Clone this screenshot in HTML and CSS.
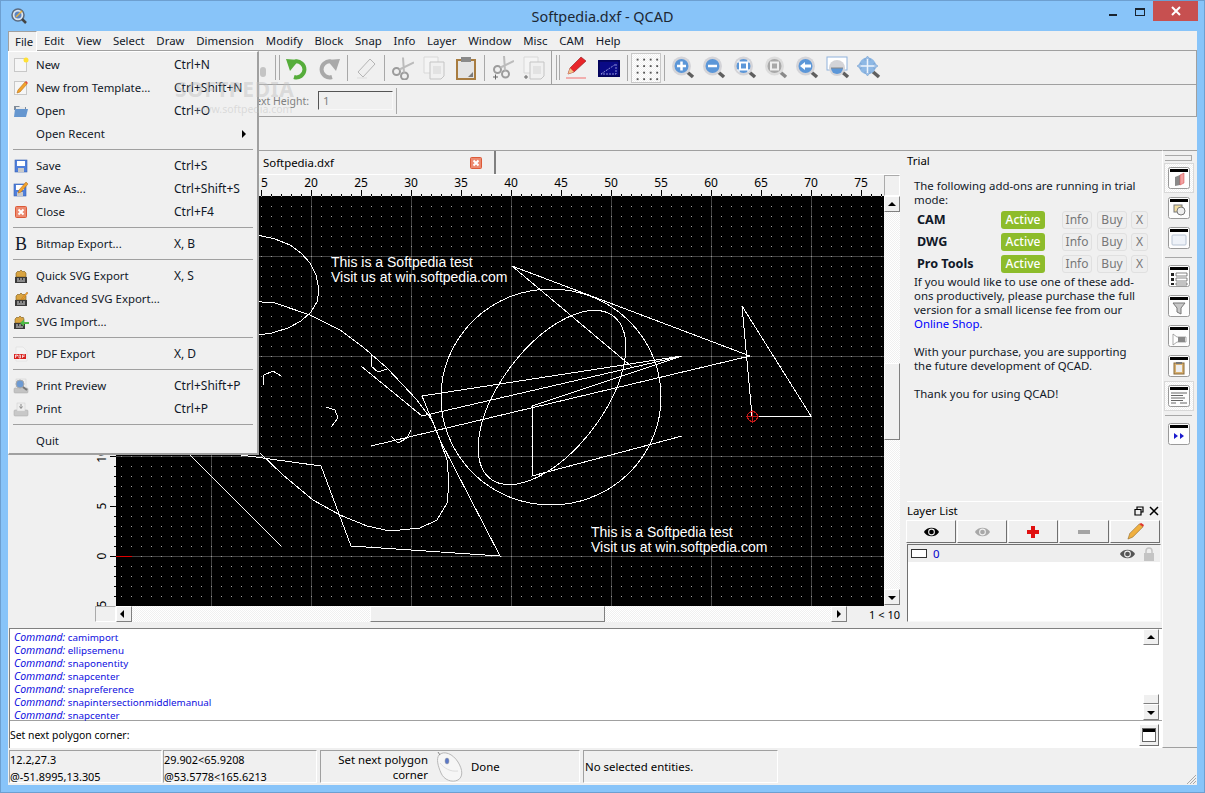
FILE: index.html
```html
<!DOCTYPE html>
<html lang="en">
<head>
    <meta charset="UTF-8">
    <title>Softpedia.dxf - QCAD</title>
    <link rel="stylesheet" href="styles.css">
</head>
<body>

<!--icon sprites-->
<svg class="sprites" xmlns="http://www.w3.org/2000/svg">
    <symbol id="i-new" viewBox="0 0 16 16"><rect x="1.5" y="1.5" width="12" height="13" fill="#f6f6f6" stroke="#c8c8c8"/><circle cx="13" cy="3" r="2.5" fill="#ffe135"/></symbol>
    <symbol id="i-template" viewBox="0 0 16 16"><rect x="1.5" y="1.5" width="12" height="13" fill="#f6f6f6" stroke="#c8c8c8"/><path d="M4 13l1-3 7-8 2 2-7 8z" fill="#f2a32c" stroke="#b8701a" stroke-width=".6"/><path d="M12 2l2 2 1-1-2-2z" fill="#e8483a"/></symbol>
    <symbol id="i-open" viewBox="0 0 16 16"><path d="M1 3h5l1 1h6v3H1z" fill="#7e8a98"/><path d="M2 6h13l-2 8H1z" fill="#6596cf"/><path d="M3 4h9v2H3z" fill="#e8e8e8"/></symbol>
    <symbol id="i-save" viewBox="0 0 16 16"><rect x="2" y="2" width="12" height="12" fill="#4f7fdc" stroke="#3b62b0" stroke-width=".6"/><rect x="4" y="3" width="8" height="5" fill="#fff"/><rect x="5" y="10" width="6" height="4" fill="#c9c9c9"/></symbol>
    <symbol id="i-saveas" viewBox="0 0 16 16"><rect x="1" y="3" width="12" height="12" fill="#4f7fdc" stroke="#3b62b0" stroke-width=".6"/><rect x="3" y="4" width="8" height="5" fill="#fff"/><rect x="4" y="11" width="6" height="4" fill="#c9c9c9"/><path d="M5 12l1-3 7-8 2 2-7 8z" fill="#f2a32c" stroke="#a8651a" stroke-width=".5"/></symbol>
    <symbol id="i-close" viewBox="0 0 16 16"><rect x="2.500" y="2.500" width="11" height="11" rx="1" fill="#ec8a70" stroke="#dc5a38"/><path d="M5.500 5.500l5 5M10.500 5.500l-5 5" stroke="#fff" stroke-width="2"/></symbol>
    <symbol id="i-svg" viewBox="0 0 16 16"><path d="M3 5l2-2 1 1 2-2 2 2 1-1 2 2v4H3z" fill="#d9a441" stroke="#7a5a1c" stroke-width=".6"/><rect x="2" y="9" width="12" height="6" fill="#3a3a3a"/><path d="M4 11h2M7 11h2M10 11h2M4 13h8" stroke="#ddd"/></symbol>
    <symbol id="i-svgedit" viewBox="0 0 16 16"><path d="M3 5l2-2 1 1 2-2 2 2 1-1 2 2v4H3z" fill="#d9a441" stroke="#7a5a1c" stroke-width=".6"/><rect x="2" y="9" width="12" height="6" fill="#3a3a3a"/><path d="M4 11h2M7 11h2M10 11h2M4 13h8" stroke="#ddd"/><path d="M8 9l1-2 5-6 1 1-5 6z" fill="#f2a32c" stroke="#a8651a" stroke-width=".4"/></symbol>
    <symbol id="i-svgin" viewBox="0 0 16 16"><path d="M2 5l2-2 1 1 2-2 2 2 1-1 1 2v4H2z" fill="#d9a441" stroke="#7a5a1c" stroke-width=".6"/><rect x="1" y="9" width="11" height="6" fill="#3a3a3a"/><path d="M3 11h2M6 11h2M3 13h7" stroke="#ddd"/><path d="M16 8h-5V5.500L7 9l4 3.500V10h5z" fill="#4fb848"/></symbol>
    <symbol id="i-pdf" viewBox="0 0 16 16"><path d="M3 1h7l4 4v10H3z" fill="#f4f4f4" stroke="#ddd" stroke-width=".6"/><rect x="1" y="8" width="12" height="5" fill="#d8231f"/><path d="M2.500 9v3M2.500 9h2v1h-2M6 9v3h1.500V9zM9.500 9v3M9.500 9H12M9.500 10.500h2" stroke="#fff" stroke-width=".7" fill="none"/></symbol>
    <symbol id="i-preview" viewBox="0 0 16 16"><rect x="1" y="10" width="14" height="5" rx="1" fill="#c4c4c4" stroke="#a8a8a8" stroke-width=".5"/><rect x="3" y="1" width="10" height="9" fill="#eee" stroke="#ccc" stroke-width=".5"/><circle cx="7" cy="6" r="4" fill="#6d9ad2" stroke="#a8a8a8"/><path d="M10 9l4 3" stroke="#777" stroke-width="2"/></symbol>
    <symbol id="i-print" viewBox="0 0 16 16"><rect x="1" y="9" width="14" height="6" rx="1" fill="#c8c8c8" stroke="#aaa" stroke-width=".5"/><rect x="4" y="2" width="8" height="8" fill="#eee" stroke="#ccc" stroke-width=".5"/><path d="M8 3v4M6.500 5.500L8 7.500l1.500-2" stroke="#888" fill="none"/></symbol>

    <symbol id="t-undo" viewBox="0 0 24 24"><path d="M10 5.500a8 8 0 1 1-1 15.500" fill="none" stroke="#56ad3b" stroke-width="4"/><path d="M1 3l13 1-9 11z" fill="#56ad3b"/></symbol>
    <symbol id="t-redo" viewBox="0 0 24 24"><path d="M14 5.500a8 8 0 1 0 1 15.500" fill="none" stroke="#a9a9a9" stroke-width="4"/><path d="M23 3l-13 1 9 11z" fill="#a9a9a9"/></symbol>
    <symbol id="t-eraser" viewBox="0 0 24 24"><path d="M4 16L16 3l5 5-12 13z" fill="#efefef" stroke="#b4b4b4"/><path d="M4 16l5 5" stroke="#b4b4b4"/><path d="M3 22h10" stroke="#ddd"/></symbol>
    <symbol id="t-scissors" viewBox="0 0 24 24"><circle cx="6.500" cy="15.500" r="3.500" fill="none" stroke="#9c9c9c" stroke-width="2"/><circle cx="14.500" cy="20" r="3.500" fill="none" stroke="#9c9c9c" stroke-width="2"/><path d="M9.500 13.500L24 6.500M14 16.500L13 1.500" stroke="#bcbcbc" stroke-width="2"/></symbol>
    <symbol id="t-copy" viewBox="0 0 24 24"><path d="M2 1h14v16H2z" fill="#f4f4f4" stroke="#d8d8d8"/><path d="M8 6h14v14l-3 3H8z" fill="#f0f0f0" stroke="#c4c4c4"/><rect x="11" y="10" width="8" height="8" fill="#e2e2e2"/></symbol>
    <symbol id="t-paste" viewBox="0 0 24 24"><rect x="3" y="4" width="18" height="19" fill="#e4e4e4" stroke="#a87c40" stroke-width="2"/><rect x="7" y="1" width="10" height="5" fill="#8a8a8a"/><path d="M14 21l5-5v5z" fill="#7a7a7a"/></symbol>
    <symbol id="t-scissors2" viewBox="0 0 24 24"><circle cx="7.500" cy="13.500" r="3.500" fill="none" stroke="#9c9c9c" stroke-width="2"/><circle cx="15.500" cy="18" r="3.500" fill="none" stroke="#9c9c9c" stroke-width="2"/><path d="M10.500 11.500L24 5M15 14.500L14 0" stroke="#bcbcbc" stroke-width="2"/><path d="M3 21h5M5.500 18.500v5" stroke="#666"/></symbol>
    <symbol id="t-copy2" viewBox="0 0 24 24"><path d="M2 1h14v16H2z" fill="#f4f4f4" stroke="#d8d8d8"/><path d="M8 6h14v14l-3 3H8z" fill="#f0f0f0" stroke="#c4c4c4"/><rect x="11" y="10" width="8" height="8" fill="#e2e2e2"/><path d="M2 21h4M4 19v4" stroke="#666"/></symbol>
    <symbol id="t-pencil" viewBox="0 0 24 24"><path d="M3 18l2-6L16 1l5 4L9 16z" fill="#e8262a" stroke="#8e1a1c" stroke-width=".6"/><path d="M3 18l2-6 4 4z" fill="#f1c48a"/><path d="M1 22h20" stroke="#f29a9a" stroke-width="1.500"/></symbol>
    <symbol id="t-screen" viewBox="0 0 22 17"><rect width="22" height="17" fill="#05057a"/><rect x="1" y="1" width="20" height="15" fill="#0a0a86" stroke="#000" stroke-width=".5"/><path d="M3 14L18 4v10z" fill="none" stroke="#aeb4e8" stroke-width=".8" stroke-dasharray="2 1"/></symbol>
    <symbol id="t-zoombase" viewBox="0 0 24 24"><path d="M15 15l7 6" stroke="#5f5f5f" stroke-width="3.500"/><circle cx="10.500" cy="10" r="9.500" fill="#d4d4d8"/><circle cx="10.500" cy="10" r="7" fill="#5c97d8"/></symbol>
    <symbol id="t-zoomin" viewBox="0 0 24 24"><use href="#t-zoombase"/><path d="M10.500 5.500v9M6 10h9" stroke="#fff" stroke-width="2.500"/></symbol>
    <symbol id="t-zoomout" viewBox="0 0 24 24"><use href="#t-zoombase"/><path d="M6 10h9" stroke="#fff" stroke-width="2.500"/></symbol>
    <symbol id="t-zoomauto" viewBox="0 0 24 24"><use href="#t-zoombase"/><rect x="7" y="6.500" width="7" height="7" fill="none" stroke="#fff" stroke-width="2"/><path d="M5 7V5h2M14 5h2v2M16 13v2h-2M7 15H5v-2" stroke="#fff" fill="none"/></symbol>
    <symbol id="t-zoomsel" viewBox="0 0 24 24"><path d="M15 15l7 6" stroke="#8a8a8a" stroke-width="3.500"/><circle cx="10.500" cy="10" r="9.500" fill="#dcdcdc"/><circle cx="10.500" cy="10" r="7" fill="#a8a8a8"/><rect x="7" y="6.500" width="7" height="7" fill="none" stroke="#eee" stroke-width="2"/></symbol>
    <symbol id="t-zoomback" viewBox="0 0 24 24"><use href="#t-zoombase"/><path d="M5 10l5-4v2.500h6v3h-6V14z" fill="#fff"/></symbol>
    <symbol id="t-zoomwin" viewBox="0 0 24 24"><rect x="1" y="1" width="20" height="13" fill="#fff" stroke="#8fb2dc"/><path d="M15 15l7 6" stroke="#5f5f5f" stroke-width="3.500"/><circle cx="11" cy="12" r="8" fill="#d4d4d8"/><path d="M5 12a6 6 0 0 0 12 0z" fill="#5c97d8"/><path d="M5 12h12" stroke="#888"/></symbol>
    <symbol id="t-zoompan" viewBox="0 0 24 24"><path d="M15 15l7 6" stroke="#5f5f5f" stroke-width="3.500"/><circle cx="10.500" cy="10" r="8.500" fill="#8eb8e4"/><path d="M10.500 0l3 4h-6zM10.500 20l3-4h-6zM0 10l4-3v6zM21 10l-4-3v6z" fill="#9cc0e8" stroke="#6f98c8" stroke-width=".5"/><path d="M10.500 3v14M3.500 10h14" stroke="#eef4fb" stroke-width="1.500"/></symbol>

    <symbol id="i-eye" viewBox="0 0 18 12"><path d="M1 6c3-6 13-6 16 0-3 6-13 6-16 0z" fill="currentColor"/><circle cx="9" cy="6" r="3.600" fill="#f0f0f0"/><circle cx="9" cy="6" r="2.500" fill="currentColor"/></symbol>
    <symbol id="i-lock" viewBox="0 0 12 14"><rect x="1" y="6" width="10" height="8" fill="#c4c4c4"/><path d="M3 6V4a3 3 0 0 1 6 0v2" fill="none" stroke="#c4c4c4" stroke-width="1.500"/></symbol>
    <symbol id="i-lpencil" viewBox="0 0 18 18"><path d="M1 17l2-6L13 1l4 3L6 15z" fill="#f0b040" stroke="#8a6420" stroke-width=".6"/><path d="M13 1l4 3 1-2-3-2z" fill="#e0342a"/></symbol>

    <symbol id="w-frame" viewBox="0 0 22 22"><rect x=".5" y=".5" width="21" height="21" rx="2" fill="#fdfdfd" stroke="#9a9a9a"/><rect x="2" y="2" width="18" height="3" fill="#000"/></symbol>
    <symbol id="w-a" viewBox="0 0 22 22"><use href="#w-frame"/><path d="M7 10l5-2v10l-5 1z" fill="#888"/><path d="M12 8l4-2v10l-4 2z" fill="#f2a0a0" stroke="#c44" stroke-width=".5"/></symbol>
    <symbol id="w-b" viewBox="0 0 22 22"><use href="#w-frame"/><rect x="6" y="8" width="8" height="7" fill="#f0dca0" stroke="#777"/><circle cx="13" cy="14" r="4" fill="#eee" stroke="#777"/></symbol>
    <symbol id="w-c" viewBox="0 0 22 22"><use href="#w-frame"/><rect x="4" y="8" width="14" height="10" rx="1" fill="#eef2f8" stroke="#b8c4d4"/></symbol>
    <symbol id="w-d" viewBox="0 0 22 22"><use href="#w-frame"/><path d="M3 8h3v3H3zM3 13h3v3H3zM3 18h3v2H3z" fill="#222"/><path d="M8 8h11v3H8zM8 13h11v3H8zM8 18h11v2H8z" fill="#fff" stroke="#555" stroke-width=".7"/></symbol>
    <symbol id="w-e" viewBox="0 0 22 22"><use href="#w-frame"/><path d="M5 8h12l-4 5v6l-4-2v-4z" fill="#c8c8c8" stroke="#777"/></symbol>
    <symbol id="w-f" viewBox="0 0 22 22"><use href="#w-frame"/><path d="M5 9l4 3h9v5H9l-4 3z" fill="#fff" stroke="#888" stroke-width=".7"/><rect x="10" y="12" width="7" height="5" fill="#888"/></symbol>
    <symbol id="w-g" viewBox="0 0 22 22"><use href="#w-frame"/><rect x="6" y="8" width="10" height="11" fill="#d8b070" stroke="#8a6a38"/><rect x="8" y="10" width="6" height="7" fill="#eee"/><rect x="8" y="7" width="6" height="2" fill="#777"/></symbol>
    <symbol id="w-h" viewBox="0 0 22 22"><use href="#w-frame"/><path d="M3 8h16M3 10.500h12M3 13h14M3 15.500h12M3 18h5M12 18h7" stroke="#666"/></symbol>
    <symbol id="w-i" viewBox="0 0 22 22"><use href="#w-frame"/><path d="M6 10l4 3-4 3zM12 10l4 3-4 3z" fill="#1a1acc"/></symbol>
    <symbol id="m-mouse" viewBox="0 0 27 31"><path d="M3 4C8-1 17 3 22 11c5 8 5 15 0 18-6 3-14 0-17-7C2 15 0 8 3 4z" fill="#f6f6f6" stroke="#b8b8b8"/><path d="M4 12c4 5 10 9 18 8" fill="none" stroke="#ddd"/><ellipse cx="11" cy="10" rx="2" ry="3" fill="#5a78c8" stroke="#999" stroke-width=".5"/><path d="M2 1l2 3" stroke="#888"/></symbol>
</svg>

<div class="window">
    <!--title bar-->
    <header class="titlebar">
        <svg class="app-icon" viewBox="0 0 16 16"><circle cx="7" cy="7" r="6" fill="#dfe6ee" stroke="#5b6b80" stroke-width="1.500"/><circle cx="7" cy="7" r="3.500" fill="#5c86c4"/><path d="M5 9l6-6" stroke="#e8b040" stroke-width="1.500"/><path d="M11 11l4 4" stroke="#444" stroke-width="2.500"/></svg>
        <span class="title">Softpedia.dxf - QCAD</span>
        <span class="win-btn win-min"></span>
        <span class="win-btn win-max"></span>
        <span class="win-btn win-close"><svg viewBox="0 0 10 10"><path d="M1 1l8 8M9 1l-8 8" stroke="#fff" stroke-width="2"/></svg></span>
    </header>

    <div class="client">
        <!--menu bar-->
        <nav class="menubar">
            <span class="menu-title open">File</span>
            <span class="menu-title">Edit</span>
            <span class="menu-title">View</span>
            <span class="menu-title">Select</span>
            <span class="menu-title">Draw</span>
            <span class="menu-title">Dimension</span>
            <span class="menu-title">Modify</span>
            <span class="menu-title">Block</span>
            <span class="menu-title">Snap</span>
            <span class="menu-title">Info</span>
            <span class="menu-title">Layer</span>
            <span class="menu-title">Window</span>
            <span class="menu-title">Misc</span>
            <span class="menu-title">CAM</span>
            <span class="menu-title">Help</span>
        </nav>

        <!--main toolbar-->
        <div class="toolrow toolrow-main">
            <span class="stub"></span>
            <span class="grip"></span>
            <span class="tool"><svg><use href="#t-undo"/></svg></span>
            <span class="tool"><svg><use href="#t-redo"/></svg></span>
            <span class="sep sep-wide"></span>
            <span class="tool"><svg><use href="#t-eraser"/></svg></span>
            <span class="sep"></span>
            <span class="tool"><svg><use href="#t-scissors"/></svg></span>
            <span class="tool"><svg><use href="#t-copy"/></svg></span>
            <span class="tool"><svg><use href="#t-paste"/></svg></span>
            <span class="sep"></span>
            <span class="tool"><svg><use href="#t-scissors2"/></svg></span>
            <span class="tool"><svg><use href="#t-copy2"/></svg></span>
            <span class="divider"></span>
            <span class="tool"><svg><use href="#t-pencil"/></svg></span>
            <span class="tool"><svg class="screen"><use href="#t-screen"/></svg></span>
            <span class="sep sep-wide"></span>
            <span class="grid-btn"><svg viewBox="0 0 30 30"><defs><pattern id="griddots" width="7" height="7" patternUnits="userSpaceOnUse"><rect x="5" y="5" width="2" height="2" fill="#555"/></pattern></defs><rect x="0" y="0" width="29" height="29" fill="url(#griddots)"/></svg></span>
            <span class="sep sep-wide"></span>
            <span class="tool tool-zoom"><svg><use href="#t-zoomin"/></svg></span>
            <span class="tool tool-zoom"><svg><use href="#t-zoomout"/></svg></span>
            <span class="tool tool-zoom"><svg><use href="#t-zoomauto"/></svg></span>
            <span class="tool tool-zoom"><svg><use href="#t-zoomsel"/></svg></span>
            <span class="tool tool-zoom"><svg><use href="#t-zoomback"/></svg></span>
            <span class="tool tool-zoom"><svg><use href="#t-zoomwin"/></svg></span>
            <span class="tool tool-zoom"><svg><use href="#t-zoompan"/></svg></span>
        </div>

        <!--options toolbar-->
        <div class="toolrow toolrow-options">
            <span class="opt-label">Text Height:</span>
            <span class="opt-input">1</span>
            <span class="opt-sep"></span>
        </div>

        <div class="toolrow toolrow-empty"></div>

        <div class="body">
            <div class="left-col">
                <div class="workspace">
                    <!--drawing area-->
                    <div class="drawing">
                        <div class="tabs">
                            <div class="tab">
                                <span class="tab-name">Softpedia.dxf</span>
                                <svg class="tab-close"><use href="#i-close"/></svg>
                            </div>
                        </div>

                        <svg class="ruler-top" viewBox="116 175 768 21">
                            <defs>
                                <pattern id="tick-h" x="1" y="175" width="10" height="21" patternUnits="userSpaceOnUse"><rect x="0" y="19" width="1" height="2" fill="#000"/></pattern>
                                <pattern id="tick-h5" x="11" y="175" width="50" height="21" patternUnits="userSpaceOnUse"><rect x="0" y="15" width="1" height="6" fill="#000"/></pattern>
                            </defs>
                            <rect x="116" y="175" width="768" height="21" fill="url(#tick-h)"/>
                            <rect x="116" y="175" width="768" height="21" fill="url(#tick-h5)"/>
                            <g class="ruler-text" text-anchor="middle">
                                <text x="261" y="187">15</text><text x="311" y="187">20</text><text x="361" y="187">25</text>
                                <text x="411" y="187">30</text><text x="461" y="187">35</text><text x="511" y="187">40</text>
                                <text x="561" y="187">45</text><text x="611" y="187">50</text><text x="661" y="187">55</text>
                                <text x="711" y="187">60</text><text x="761" y="187">65</text><text x="811" y="187">70</text>
                                <text x="861" y="187">75</text>
                            </g>
                        </svg>

                        <div class="vscroll">
                            <span class="corner"></span>
                            <span class="arrow arrow-up"></span>
                            <span class="track track-v1"></span>
                            <span class="thumb thumb-v"></span>
                            <span class="track track-v2"></span>
                            <span class="arrow arrow-down"></span>
                        </div>

                        <svg class="ruler-left" viewBox="95 196 21 410">
                            <defs>
                                <pattern id="tick-v" x="95" y="6" width="21" height="10" patternUnits="userSpaceOnUse"><rect x="19" y="0" width="2" height="1" fill="#000"/></pattern>
                                <pattern id="tick-v5" x="95" y="6" width="21" height="50" patternUnits="userSpaceOnUse"><rect x="15" y="0" width="6" height="1" fill="#000"/></pattern>
                            </defs>
                            <rect x="95" y="196" width="21" height="410" fill="url(#tick-v)"/>
                            <rect x="95" y="196" width="21" height="410" fill="url(#tick-v5)"/>
                            <g class="ruler-text" text-anchor="middle">
                                <text transform="translate(106 456) rotate(-90)">10</text>
                                <text transform="translate(106 506) rotate(-90)">5</text>
                                <text transform="translate(106 556) rotate(-90)">0</text>
                                <text transform="translate(106 606) rotate(-90)">-5</text>
                            </g>
                        </svg>

                        <svg class="canvas" viewBox="116 196 768 410">
                            <defs>
                                <pattern id="dots" width="10" height="10" patternUnits="userSpaceOnUse"><rect x="1" y="6" width="1" height="1" fill="#a0a0a0"/></pattern>
                                <pattern id="major" width="100" height="100" patternUnits="userSpaceOnUse"><rect x="11" y="0" width="1" height="100" fill="#444"/><rect x="0" y="56" width="100" height="1" fill="#444"/></pattern>
                            </defs>
                            <rect x="116" y="196" width="768" height="410" fill="#000"/>
                            <rect x="116" y="196" width="768" height="410" fill="url(#major)"/>
                            <rect x="116" y="196" width="768" height="410" fill="url(#dots)"/>
                            <path d="M116 556.500h16" stroke="#e00000"/>
                            <g class="shapes">
                                <path d="M250 234L262 236 275 239 290 245 301 253 310 263 316 275 319 290 317 302 311 312 301 321 288 328 272 333 250 336"/>
                                <path d="M250 301L262 302 275 303 310 315 340 330 363 347 387 368 417 400 432 420 440 440 447 460 449 483 447 503 437 520 420 528 390 531 367 526 340 515 313 500 283 475 260 453"/>
                                <path d="M241 455L321 466 351 546 500 556 440 440 422 396 682 356 422 416 361 366"/>
                                <path d="M190 455L281 546"/>
                                <path d="M371 446L750 356 512 266 631 366"/>
                                <path d="M742 306L752 416 811 416Z"/>
                                <path d="M532 406V476L682 436"/>
                                <path d="M532 406L682 356"/>
                                <ellipse cx="551" cy="397" rx="110" ry="108"/>
                                <ellipse cx="552" cy="397.500" rx="102" ry="51.500" transform="rotate(-53 552 397.500)"/>
                                <path d="M371 355V366L378 372 387 369"/>
                                <path d="M263 385L264 375 273 371 281 376"/>
                                <path d="M326 407L335 410 338 418 331 427"/>
                                <path d="M391 436L398 443 407 438 411 430"/>
                            </g>
                            <g class="marker">
                                <circle cx="752.500" cy="416.500" r="5"/>
                                <path d="M752.500 410V423M746 416.500H759"/>
                            </g>
                            <g class="canvas-text">
                                <text x="331" y="267">This is a Softpedia test</text>
                                <text x="331" y="282">Visit us at win.softpedia.com</text>
                                <text x="591" y="537">This is a Softpedia test</text>
                                <text x="591" y="552">Visit us at win.softpedia.com</text>
                            </g>
                        </svg>

                        <div class="hscroll">
                            <span class="corner corner-h"></span>
                            <span class="arrow arrow-left"></span>
                            <span class="track track-h1"></span>
                            <span class="thumb thumb-h"></span>
                            <span class="track track-h2"></span>
                            <span class="arrow arrow-right"></span>
                            <span class="grid-info">1 &lt; 10</span>
                        </div>
                    </div>

                    <!--right dock-->
                    <aside class="dock">
                        <section class="trial">
                            <div class="panel-title">Trial</div>
                            <div class="trial-body">
                                <p>The following add-ons are running in trial mode:</p>
                                <div class="addon addon-first">
                                    <b class="addon-name">CAM</b><span class="btn-active">Active</span><span class="btn-small btn-info">Info</span><span class="btn-small btn-buy">Buy</span><span class="btn-small btn-x">X</span>
                                </div>
                                <div class="addon">
                                    <b class="addon-name">DWG</b><span class="btn-active">Active</span><span class="btn-small btn-info">Info</span><span class="btn-small btn-buy">Buy</span><span class="btn-small btn-x">X</span>
                                </div>
                                <div class="addon">
                                    <b class="addon-name">Pro Tools</b><span class="btn-active">Active</span><span class="btn-small btn-info">Info</span><span class="btn-small btn-buy">Buy</span><span class="btn-small btn-x">X</span>
                                </div>
                                <p>If you would like to use one of these add-<br>ons productively, please purchase the full<br>version for a small license fee from our<br><a href="#" class="shop">Online Shop</a>.</p>
                                <p class="gap">With your purchase, you are supporting<br>the future development of QCAD.</p>
                                <p class="gap">Thank you for using QCAD!</p>
                            </div>
                        </section>

                        <section class="layers">
                            <div class="layers-head">
                                <span>Layer List</span>
                                <svg class="head-icon" viewBox="0 0 10 10"><path d="M3 3V1h6v5H7M1 3.500h6v5.500H1z" fill="none" stroke="#000" stroke-width="1.200"/></svg>
                                <svg class="head-icon" viewBox="0 0 10 10"><path d="M1 1l8 8M9 1l-8 8" stroke="#000" stroke-width="1.500"/></svg>
                            </div>
                            <div class="layer-btns">
                                <span class="layer-btn"><svg class="eye eye-dark"><use href="#i-eye"/></svg></span>
                                <span class="layer-btn"><svg class="eye eye-light"><use href="#i-eye"/></svg></span>
                                <span class="layer-btn"><svg class="glyph" viewBox="0 0 12 12"><path d="M4 0h4v4h4v4H8v4H4V8H0V4h4z" fill="#e01010"/></svg></span>
                                <span class="layer-btn"><svg class="glyph" viewBox="0 0 12 12"><rect y="4" width="12" height="4" fill="#a4a4a4"/></svg></span>
                                <span class="layer-btn"><svg class="pencil"><use href="#i-lpencil"/></svg></span>
                            </div>
                            <div class="layer-list">
                                <div class="layer-row">
                                    <span class="swatch"></span>
                                    <span class="layer-name">0</span>
                                    <svg class="eye eye-row"><use href="#i-eye"/></svg>
                                    <svg class="lock"><use href="#i-lock"/></svg>
                                </div>
                            </div>
                        </section>
                    </aside>
                </div>

                <!--command line-->
                <div class="command">
                    <div class="history">
                        <div class="history-lines">
                            <div><i>Command:</i> camimport</div>
                            <div><i>Command:</i> ellipsemenu</div>
                            <div><i>Command:</i> snaponentity</div>
                            <div><i>Command:</i> snapcenter</div>
                            <div><i>Command:</i> snapreference</div>
                            <div><i>Command:</i> snapintersectionmiddlemanual</div>
                            <div><i>Command:</i> snapcenter</div>
                        </div>
                        <div class="history-scroll">
                            <span class="arrow arrow-up"></span>
                            <span class="history-space"></span>
                            <span class="thumb history-thumb"></span>
                            <span class="arrow arrow-down"></span>
                        </div>
                    </div>
                    <div class="prompt">
                        <span>Set next polygon corner:</span>
                        <span class="prompt-btn"><svg viewBox="0 0 14 14"><rect x=".5" y=".5" width="13" height="13" fill="#fff" stroke="#666"/><rect x="1" y="1" width="12" height="3" fill="#000"/></svg></span>
                    </div>
                </div>
            </div>

            <!--side button bar-->
            <div class="sidebar">
                <span class="side-grip"></span>
                <span class="side-btn pressed"><svg><use href="#w-a"/></svg></span>
                <span class="side-btn"><svg><use href="#w-b"/></svg></span>
                <span class="side-btn"><svg><use href="#w-c"/></svg></span>
                <span class="side-sep"></span>
                <span class="side-btn"><svg><use href="#w-d"/></svg></span>
                <span class="side-btn"><svg><use href="#w-e"/></svg></span>
                <span class="side-btn"><svg><use href="#w-f"/></svg></span>
                <span class="side-btn"><svg><use href="#w-g"/></svg></span>
                <span class="side-btn pressed"><svg><use href="#w-h"/></svg></span>
                <span class="side-sep"></span>
                <span class="side-btn"><svg><use href="#w-i"/></svg></span>
            </div>
        </div>

        <!--status bar-->
        <footer class="statusbar">
            <div class="cell cell-coord"><div>12.2,27.3</div><div>@-51.8995,13.305</div></div>
            <div class="cell cell-polar"><div>29.902&lt;65.9208</div><div>@53.5778&lt;165.6213</div></div>
            <div class="cell cell-mouse">
                <span class="mouse-text">Set next polygon corner</span>
                <svg class="mouse"><use href="#m-mouse"/></svg>
                <span>Done</span>
            </div>
            <div class="cell cell-sel">No selected entities.</div>
            <svg class="size-grip" viewBox="0 0 12 12"><path d="M11 2L2 11M11 5l-6 6M11 8l-3 3" stroke="#a8a8a8"/></svg>
        </footer>

        <!--open File menu-->
        <div class="file-menu">
            <div class="item"><svg class="ico"><use href="#i-new"/></svg><span class="label">New</span><span class="key">Ctrl+N</span></div>
            <div class="item"><svg class="ico"><use href="#i-template"/></svg><span class="label">New from Template...</span><span class="key">Ctrl+Shift+N</span></div>
            <div class="item"><svg class="ico"><use href="#i-open"/></svg><span class="label">Open</span><span class="key">Ctrl+O</span></div>
            <div class="item"><span class="ico"></span><span class="label">Open Recent</span><span class="key"></span><span class="sub-arrow"></span></div>
            <div class="menu-sep"></div>
            <div class="item"><svg class="ico"><use href="#i-save"/></svg><span class="label">Save</span><span class="key">Ctrl+S</span></div>
            <div class="item"><svg class="ico"><use href="#i-saveas"/></svg><span class="label">Save As...</span><span class="key">Ctrl+Shift+S</span></div>
            <div class="item"><svg class="ico"><use href="#i-close"/></svg><span class="label">Close</span><span class="key">Ctrl+F4</span></div>
            <div class="menu-sep"></div>
            <div class="item"><span class="ico ico-b">B</span><span class="label">Bitmap Export...</span><span class="key">X, B</span></div>
            <div class="menu-sep"></div>
            <div class="item"><svg class="ico"><use href="#i-svg"/></svg><span class="label">Quick SVG Export</span><span class="key">X, S</span></div>
            <div class="item"><svg class="ico"><use href="#i-svgedit"/></svg><span class="label">Advanced SVG Export...</span><span class="key"></span></div>
            <div class="item"><svg class="ico"><use href="#i-svgin"/></svg><span class="label">SVG Import...</span><span class="key"></span></div>
            <div class="menu-sep"></div>
            <div class="item"><svg class="ico"><use href="#i-pdf"/></svg><span class="label">PDF Export</span><span class="key">X, D</span></div>
            <div class="menu-sep"></div>
            <div class="item"><svg class="ico"><use href="#i-preview"/></svg><span class="label">Print Preview</span><span class="key">Ctrl+Shift+P</span></div>
            <div class="item"><svg class="ico"><use href="#i-print"/></svg><span class="label">Print</span><span class="key">Ctrl+P</span></div>
            <div class="menu-sep"></div>
            <div class="item"><span class="ico"></span><span class="label">Quit</span><span class="key"></span></div>
        </div>

        <!--watermark over the menu-->
        <div class="watermark">
            <div class="wm-big">SOFTPEDIA</div>
            <div class="wm-small">www.softpedia.com</div>
        </div>
    </div>
</div>

</body>
</html>
```

FILE: styles.css
```css
* {
    margin: 0;
    padding: 0;
    box-sizing: border-box;
}

html, body {
    width: 1205px;
    height: 793px;
    overflow: hidden;
}

body {
    font-family: "Noto Sans", "Liberation Sans", sans-serif;
    font-size: 11.400px;
    color: #000;
    background-color: #88c4f9;
}

.sprites {
    position: absolute;
    width: 0;
    height: 0;
}

/*window frame*/
.window {
    width: 1205px;
    height: 793px;
    display: flex;
    flex-direction: column;
    background-color: #88c4f9;
    border: 1px solid #6d9fd0;
    padding: 0 7px 7px;
}

.titlebar {
    height: 30px;
    position: relative;
    display: flex;
    align-items: center;
    justify-content: center;
}

.app-icon {
    position: absolute;
    left: 3px;
    top: 7px;
    width: 16px;
    height: 16px;
}

.title {
    font-size: 14.400px;
    color: #1c2733;
}

.win-btn {
    position: absolute;
    display: flex;
    align-items: center;
    justify-content: center;
}

.win-min {
    left: 1101px;
    top: 13px;
    width: 8px;
    height: 2px;
    background-color: #1a2430;
}

.win-max {
    left: 1127px;
    top: 7px;
    width: 10px;
    height: 8px;
    border: 1px solid #1a2430;
    border-top-width: 2px;
}

.win-close {
    left: 1145px;
    top: 0;
    width: 45px;
    height: 20px;
    background-color: #c75050;
}

.win-close svg {
    width: 10px;
    height: 10px;
}

.client {
    position: relative;
    flex: 1;
    display: flex;
    flex-direction: column;
    background-color: #f0f0f0;
    min-height: 0;
}

/*menu bar*/
.menubar {
    height: 19px;
    display: flex;
    align-items: center;
    padding-left: 7px;
    gap: 11.800px;
}

.menu-title {
    line-height: 19px;
    color: #101828;
}

.menu-title.open {
    margin-left: -7px;
    margin-right: -5px;
    padding: 1px 3px 0 6px;
    height: 20px;
    background-color: #f0f0f0;
    border-left: 1px solid #a0a0a0;
    border-top: 1px solid #a0a0a0;
    border-right: 1px solid #fff;
    line-height: 18px;
    position: relative;
    z-index: 3;
}

/*toolbars*/
.toolrow {
    border-top: 1px solid #a0a0a0;
    border-right: 1px solid #a0a0a0;
    display: flex;
    align-items: center;
}

.toolrow-main {
    height: 34px;
    padding-left: 252px;
}

.toolrow-options {
    height: 32px;
}

.toolrow-empty {
    height: 34px;
    border-right: none;
}

.stub {
    width: 6px;
    height: 10px;
    margin-top: 8px;
    margin-right: 9px;
    background-color: #c4c4c4;
    border-radius: 3px;
}

.grip {
    width: 5px;
    height: 25px;
    margin-right: 1px;
    border-left: 1px solid #a8a8a8;
    border-right: 1px solid #a8a8a8;
}

.tool {
    width: 32px;
    height: 32px;
    display: flex;
    align-items: center;
    justify-content: center;
}

.tool svg {
    width: 24px;
    height: 24px;
}

.tool svg.screen {
    width: 22px;
    height: 17px;
    margin-top: 2px;
}

.tool-zoom {
    width: 31px;
}

.sep {
    width: 4px;
    height: 26px;
    background: linear-gradient(#a8a8a8, #a8a8a8) center / 1px 100% no-repeat;
}

.sep-wide {
    width: 5px;
}

.divider {
    width: 11px;
    height: 33px;
    background:
        linear-gradient(#a0a0a0, #a0a0a0) 1px 0 / 1px 100% no-repeat,
        linear-gradient(#a8a8a8, #a8a8a8) 6px 4px / 1px 25px no-repeat,
        linear-gradient(#a8a8a8, #a8a8a8) 9px 4px / 1px 25px no-repeat;
}

.grid-btn {
    width: 30px;
    height: 30px;
    margin: 0 1px;
    border: 1px solid #c8c8c8;
    background: repeating-conic-gradient(#fff 0 25%, #f0f0f0 0 50%) 0 0 / 2px 2px;
}

.grid-btn svg {
    display: block;
    width: 28px;
    height: 28px;
}

.opt-label {
    width: 301px;
    text-align: right;
    font-size: 10.500px;
    color: #808080;
}

.opt-input {
    width: 75px;
    height: 19px;
    margin-left: 9px;
    padding-left: 4px;
    line-height: 17px;
    color: #808080;
    border: 1px solid #f8f8f8;
    border-top-color: #555;
    border-left-color: #555;
}

.opt-sep {
    width: 1px;
    height: 26px;
    margin-left: 3px;
    background-color: #a8a8a8;
}

/*main area*/
.body {
    flex: 1;
    display: flex;
    min-height: 0;
}

.left-col {
    width: 1154px;
    display: flex;
    flex-direction: column;
    border-top: 1px solid #a0a0a0;
}

.workspace {
    height: 477px;
    display: flex;
    gap: 7px;
}

.drawing {
    width: 892px;
    display: grid;
    grid-template-columns: 87px 21px 768px 16px;
    grid-template-rows: 24px 21px 410px 17px;
}

.tabs {
    grid-column: 2 / 5;
    grid-row: 1;
    border-bottom: 1px solid #fff;
}

.tab {
    width: 401px;
    height: 23px;
    display: flex;
    align-items: center;
    padding-left: 168px;
    border-right: 2px solid #808080;
}

.tab-name {
    width: 205px;
}

.tab-close {
    width: 16px;
    height: 16px;
}

.ruler-top {
    grid-column: 3;
    grid-row: 2;
    width: 768px;
    height: 21px;
    display: block;
}

.ruler-left {
    grid-column: 2;
    grid-row: 3;
    width: 21px;
    height: 410px;
    display: block;
}

.ruler-text {
    font-family: "Noto Sans", sans-serif;
    font-size: 12px;
    fill: #000;
}

.canvas {
    grid-column: 3;
    grid-row: 3;
    width: 768px;
    height: 410px;
    display: block;
}

.shapes * {
    fill: none;
    stroke: #fff;
    stroke-width: 1;
    shape-rendering: crispEdges;
}

.marker * {
    fill: none;
    stroke: #c01818;
    stroke-width: 1;
    shape-rendering: crispEdges;
}

.canvas-text {
    font-family: "Liberation Sans", sans-serif;
    font-size: 14px;
    fill: #fff;
}

.vscroll {
    grid-column: 4;
    grid-row: 2 / 4;
    display: flex;
    flex-direction: column;
}

.corner {
    height: 21px;
    border: 1px solid #fff;
    border-top-color: #aaa;
    border-left-color: #aaa;
}

.hscroll {
    grid-column: 2 / 5;
    grid-row: 4;
    height: 16px;
    display: flex;
}

.corner-h {
    width: 21px;
    height: 16px;
}

/*scroll bar parts*/
.arrow {
    width: 16px;
    height: 16px;
    flex: none;
    position: relative;
    background-color: #f0f0f0;
    border: 1px solid #808080;
    border-top-color: #fff;
    border-left-color: #fff;
}

.arrow::after {
    content: "";
    position: absolute;
    left: 3px;
    top: 4px;
    border: 4px solid transparent;
}

.arrow-up::after {
    top: 1px;
    border-bottom-color: #000;
}

.arrow-down::after {
    top: 6px;
    border-top-color: #000;
}

.arrow-left::after {
    left: -1px;
    top: 3px;
    border-right-color: #000;
}

.arrow-right::after {
    left: 5px;
    top: 3px;
    border-left-color: #000;
}

.track {
    background: repeating-conic-gradient(#fff 0 25%, #f0f0f0 0 50%) 0 0 / 2px 2px;
}

.track-v1 {
    height: 151px;
}

.track-v2 {
    height: 149px;
}

.track-h1 {
    width: 238px;
}

.track-h2 {
    width: 226px;
}

.thumb {
    background-color: #f0f0f0;
    border: 1px solid #808080;
    border-top-color: #fff;
    border-left-color: #fff;
}

.thumb-v {
    height: 77px;
}

.thumb-h {
    width: 235px;
}

.grid-info {
    flex: 1;
    text-align: right;
    font-size: 11px;
    line-height: 18px;
}

/*dock*/
.dock {
    width: 255px;
    display: flex;
    flex-direction: column;
}

.trial {
    height: 350px;
}

.panel-title {
    height: 21px;
    line-height: 20px;
}

.trial-body {
    padding: 7px 7px 0;
    line-height: 14px;
    color: #101828;
}

.gap {
    margin-top: 14px;
}

.shop {
    color: #0000ff;
    text-decoration: none;
}

.addon {
    height: 22px;
    display: flex;
    align-items: center;
}

.addon-first {
    margin-top: 2px;
}

.addon-name {
    width: 87px;
    padding-left: 3px;
    font-size: 12.600px;
}

.btn-active {
    width: 44px;
    height: 18px;
    line-height: 17px;
    text-align: center;
    font-size: 12px;
    font-weight: 500;
    color: #fff;
    background-color: #8dbc2b;
    border-radius: 3px;
    margin-right: 17px;
}

.btn-small {
    height: 18px;
    line-height: 16px;
    text-align: center;
    font-size: 12px;
    color: #777;
    background-color: #eee;
    border: 1px solid #e0e0e0;
    border-radius: 3px;
}

.btn-info {
    width: 30px;
    margin-right: 5px;
}

.btn-buy {
    width: 30px;
    margin-right: 4px;
}

.btn-x {
    width: 17px;
}

.layers {
    flex: 1;
    border-top: 1px solid #fff;
}

.layers-head {
    height: 18px;
    display: flex;
    align-items: center;
    gap: 5px;
    padding-right: 3px;
}

.layers-head span {
    flex: 1;
    line-height: 18px;
}

.head-icon {
    width: 10px;
    height: 10px;
}

.layer-btns {
    height: 24px;
    display: flex;
    gap: 1px;
    margin-left: -1px;
}

.layer-btn {
    width: 50px;
    height: 23px;
    display: flex;
    align-items: center;
    justify-content: center;
    background-color: #f0f0f0;
    border: 1px solid #707070;
    border-top-color: #fff;
    border-left-color: #fff;
}

.eye {
    width: 17px;
    height: 12px;
}

.eye-dark {
    color: #000;
}

.eye-light {
    color: #a8a8a8;
}

.eye-row {
    color: #555;
    margin-right: 7px;
}

.glyph {
    width: 12px;
    height: 12px;
}

.pencil {
    width: 17px;
    height: 17px;
}

.layer-list {
    width: 254px;
    height: 78px;
    background-color: #fff;
    border: 1px solid #f8f8f8;
    border-top: 1px solid #707070;
    border-left: 1px solid #707070;
}

.layer-row {
    height: 17px;
    display: flex;
    align-items: center;
    background-color: #eee;
    padding-left: 3px;
    padding-right: 5px;
}

.swatch {
    width: 16px;
    height: 9px;
    background-color: #fff;
    border: 1px solid #333;
}

.layer-name {
    flex: 1;
    margin-left: 6px;
    color: #0000cc;
}

.lock {
    width: 12px;
    height: 14px;
}

/*command line*/
.command {
    flex: 1;
    display: flex;
    flex-direction: column;
    border-left: 1px solid #808080;
    margin-left: 1px;
}

.history {
    height: 93px;
    display: flex;
    background-color: #fff;
    border-top: 1px solid #808080;
    border-bottom: 1px solid #a0a0a0;
}

.history-lines {
    flex: 1;
    padding: 2px 0 0 4px;
    font-size: 9.800px;
    line-height: 13px;
    color: #1010e0;
}

.history-lines i {
    font-size: 10.500px;
}

.history-scroll {
    width: 16px;
    margin-right: 3px;
    display: flex;
    flex-direction: column;
}

.history-space {
    flex: 1;
}

.history-thumb {
    height: 10px;
}

.prompt {
    flex: 1;
    display: flex;
    align-items: center;
    background-color: #fff;
    justify-content: space-between;
    padding-right: 3px;
    font-size: 10.400px;
}

.prompt-btn {
    width: 20px;
    height: 22px;
    display: flex;
    align-items: center;
    justify-content: center;
    background-color: #f0f0f0;
    border: 1px solid #707070;
    border-top-color: #fff;
    border-left-color: #fff;
}

.prompt-btn svg {
    width: 14px;
    height: 14px;
}

/*side bar*/
.sidebar {
    flex: 1;
    display: flex;
    flex-direction: column;
    align-items: center;
    border-top: 1px solid #a0a0a0;
    border-left: 1px solid #fff;
    border-bottom: 1px solid #a0a0a0;
    padding-top: 4px;
    padding-right: 3px;
}

.side-grip {
    width: 27px;
    height: 6px;
    margin-bottom: 2px;
    border: 1px solid #a8a8a8;
    border-left: none;
}

.side-btn {
    width: 30px;
    height: 30px;
    display: flex;
    align-items: center;
    justify-content: center;
}

.side-btn svg {
    width: 22px;
    height: 22px;
}

.side-btn.pressed {
    background: repeating-conic-gradient(#fff 0 25%, #f0f0f0 0 50%) 0 0 / 2px 2px;
    border: 1px solid #d8d8d8;
}

.side-sep {
    width: 27px;
    height: 1px;
    margin: 4px 0 3px;
    background-color: #a8a8a8;
}

/*status bar*/
.statusbar {
    height: 37px;
    display: flex;
    position: relative;
    padding: 2px 0 2px 1px;
    gap: 1px;
}

.cell {
    height: 33px;
    border: 1px solid #a0a0a0;
    border-right-color: #fff;
    border-bottom-color: #fff;
}

.cell-coord,
.cell-polar {
    font-size: 10.900px;
    line-height: 17px;
    padding-left: 0;
}

.cell-coord {
    width: 153px;
}

.cell-polar {
    width: 154px;
    margin-right: 2px;
}

.cell-mouse {
    width: 260px;
    display: flex;
    align-items: center;
    margin-right: 2px;
}

.mouse-text {
    width: 107px;
    text-align: right;
    line-height: 15px;
}

.mouse {
    width: 27px;
    height: 31px;
    margin: 0 8px;
}

.cell-sel {
    width: 195px;
    line-height: 31px;
    padding-left: 1px;
}

.size-grip {
    position: absolute;
    right: 0;
    bottom: 0;
    width: 12px;
    height: 12px;
}

/*dropdown*/
.file-menu {
    position: absolute;
    left: 0;
    top: 20px;
    width: 251px;
    height: 404px;
    padding-top: 1px;
    z-index: 2;
    background-color: #f0f0f0;
    border-top: 1px solid #fff;
    border-left: 1px solid #fff;
    border-right: 2px solid #a0a0a0;
    border-bottom: 2px solid #a0a0a0;
}

.item {
    height: 23px;
    display: flex;
    align-items: center;
    position: relative;
    color: #101828;
}

.ico {
    width: 16px;
    height: 16px;
    margin-left: 4px;
    flex: none;
}

.ico-b {
    font-family: "Liberation Serif", serif;
    font-size: 18px;
    font-weight: 400;
    line-height: 16px;
    text-align: center;
}

.label {
    width: 138px;
    margin-left: 7px;
    white-space: nowrap;
}

.key {
    font-size: 12px;
    white-space: nowrap;
}

.sub-arrow {
    position: absolute;
    right: 11px;
    top: 8px;
    border: 4px solid transparent;
    border-left-color: #000;
    border-right: none;
}

.menu-sep {
    height: 9px;
    margin: 0 4px;
    background: linear-gradient(#a0a0a0, #a0a0a0) center / 100% 1px no-repeat;
}

.watermark {
    position: absolute;
    left: 167px;
    top: 46px;
    width: 130px;
    z-index: 4;
    pointer-events: none;
    color: rgba(190, 190, 190, 0.45);
}

.wm-big {
    font-size: 21px;
    font-weight: 700;
    line-height: 24px;
    letter-spacing: 0.500px;
}

.wm-small {
    margin-left: 20px;
    margin-top: 1px;
    font-size: 10.500px;
    line-height: 14px;
}
```
